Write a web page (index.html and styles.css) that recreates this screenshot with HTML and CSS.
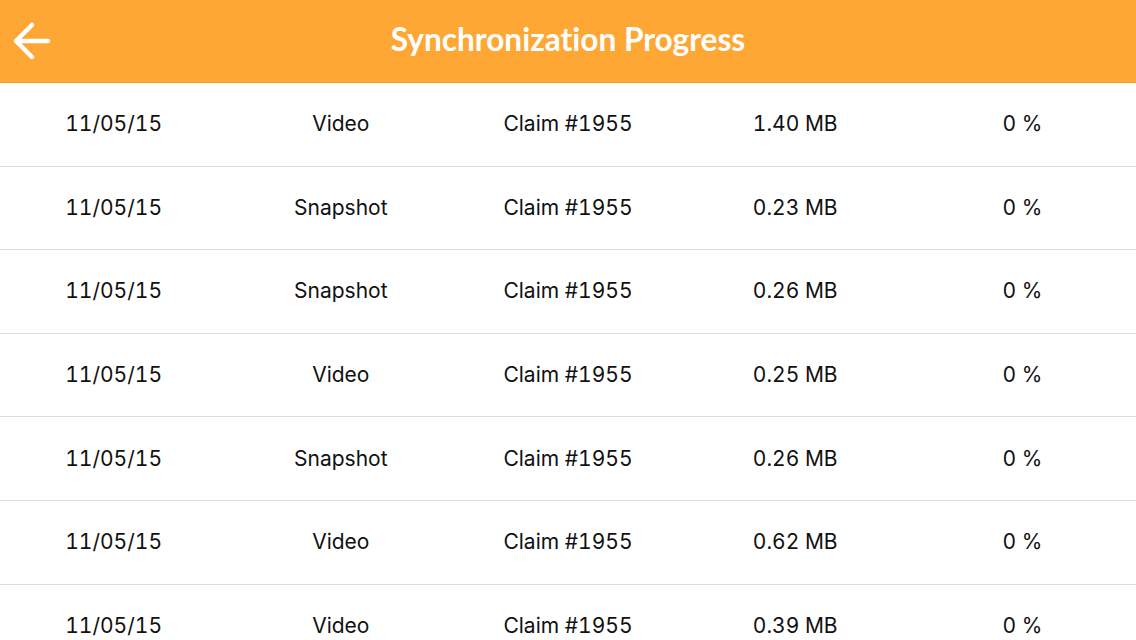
FILE: index.html
```html
<!DOCTYPE html>
<html lang="en">
<head>
    <meta charset="UTF-8">
    <meta name="viewport" content="width=device-width, initial-scale=1.0">
    <title>Synchronization Progress</title>
    <link rel="stylesheet" href="styles.css">
</head>
<body>

<header class="kopfzeile">
    <button class="zurueck" type="button" aria-label="Back">
        <svg width="40" height="40" viewBox="0 0 40 40">
            <path d="M20 4 L4 20 L20 36 M4 20 L36 20" fill="none" stroke="#fff" stroke-width="4.5" stroke-linecap="round" stroke-linejoin="round"/>
        </svg>
    </button>
    <h1>Synchronization Progress</h1>
</header>

<div class="liste">
    <div class="zeile"><span>11/05/15</span><span>Video</span><span>Claim #1955</span><span>1.40 MB</span><span>0 %</span></div>
    <div class="zeile"><span>11/05/15</span><span>Snapshot</span><span>Claim #1955</span><span>0.23 MB</span><span>0 %</span></div>
    <div class="zeile"><span>11/05/15</span><span>Snapshot</span><span>Claim #1955</span><span>0.26 MB</span><span>0 %</span></div>
    <div class="zeile"><span>11/05/15</span><span>Video</span><span>Claim #1955</span><span>0.25 MB</span><span>0 %</span></div>
    <div class="zeile"><span>11/05/15</span><span>Snapshot</span><span>Claim #1955</span><span>0.26 MB</span><span>0 %</span></div>
    <div class="zeile"><span>11/05/15</span><span>Video</span><span>Claim #1955</span><span>0.62 MB</span><span>0 %</span></div>
    <div class="zeile"><span>11/05/15</span><span>Video</span><span>Claim #1955</span><span>0.39 MB</span><span>0 %</span></div>
</div>

</body>
</html>
```

FILE: styles.css
```css
body {
    margin: 0;
    font-family: Inter, "Noto Sans", sans-serif;
    background: #fff;
    color: #111;
    overflow: hidden;
}
.kopfzeile {
    height: 83px;
    box-sizing: border-box;
    background: #ffa735;
    border-bottom: 1px solid #f79d22;
    display: flex;
    align-items: center;
    justify-content: center;
    position: relative;
}
.kopfzeile h1 {
    margin: 0 0 4px;
    color: #fff;
    font-family: Lato, "Open Sans", sans-serif;
    font-weight: bold;
    font-size: 31.6px;
    font-variant-ligatures: none;
}
.zurueck {
    position: absolute;
    left: 12px;
    top: 21px;
    padding: 0;
    border: none;
    background: none;
    width: 40px;
    height: 40px;
    cursor: pointer;
}
.zeile {
    display: grid;
    grid-template-columns: repeat(5, 1fr);
    height: 83.6px;
    box-sizing: border-box;
    border-bottom: 1px solid #d9dee3;
    align-items: center;
    text-align: center;
    font-size: 21px;
    font-variant-numeric: tabular-nums;
    padding-bottom: 1px;
}
```
